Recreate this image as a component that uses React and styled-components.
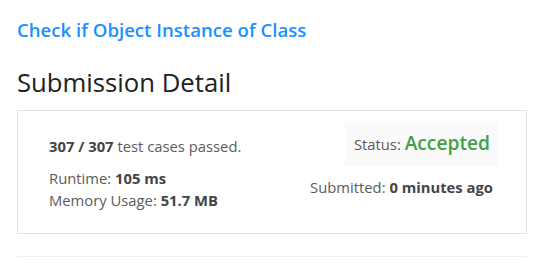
import React from 'react';
import styled, { createGlobalStyle } from 'styled-components';

const GlobalStyle = createGlobalStyle`
  body {
    margin: 0;
    background: #fff;
    font-family: "Open Sans", "Noto Sans", sans-serif;
  }
`;

const Page = styled.div`
  width: 510px;
  padding: 17px 0 0 17px;
`;

const ProblemLink = styled.a`
  display: block;
  color: #1a90ff;
  font-size: 18.6px;
  font-weight: 600;
  line-height: 26px;
  text-decoration: none;
`;

const Heading = styled.h3`
  margin: 24px 0 11px;
  color: #212121;
  font-size: 25.7px;
  font-weight: 500;
  line-height: 32px;
`;

const Panel = styled.div`
  display: flex;
  justify-content: space-between;
  border: 1px solid #e0e0e0;
  padding: 12px 30px 22px 31px;
  color: #5c5c5c;
  font-size: 14.8px;
`;

const Column = styled.div`
  display: flex;
  flex-direction: column;
  align-items: ${p => (p.right ? 'flex-end' : 'flex-start')};
`;

const Line = styled.div`
  line-height: 22px;
  margin-top: ${p => p.gap || 0}px;
  margin-right: ${p => p.inset || 0}px;
`;

const Strong = styled.b`
  color: #454545;
  font-weight: 700;
`;

const StatusBox = styled.div`
  background: #fafafa;
  padding: 7px 8px 9px 9px;
  margin-right: -2px;
  line-height: 25px;
`;

const Accepted = styled.span`
  color: #43a047;
  font-size: 19.2px;
  font-weight: 600;
`;

const Divider = styled.hr`
  margin: 22px 0 0;
  border: 0;
  border-top: 1px solid #eeeeee;
`;

export default function App() {
  return (
    <Page>
      <GlobalStyle />
      <ProblemLink href="#">Check if Object Instance of Class</ProblemLink>
      <Heading>Submission Detail</Heading>
      <Panel>
        <Column>
          <Line gap={12}>
            <Strong>307 / 307</Strong> test cases passed.
          </Line>
          <Line gap={10}>
            Runtime: <Strong>105 ms</Strong>
          </Line>
          <Line>
            Memory Usage: <Strong>51.7 MB</Strong>
          </Line>
        </Column>
        <Column right>
          <StatusBox>
            Status: <Accepted>Accepted</Accepted>
          </StatusBox>
          <Line gap={10} inset={3}>
            Submitted: <Strong>0 minutes ago</Strong>
          </Line>
        </Column>
      </Panel>
      <Divider />
    </Page>
  );
}
